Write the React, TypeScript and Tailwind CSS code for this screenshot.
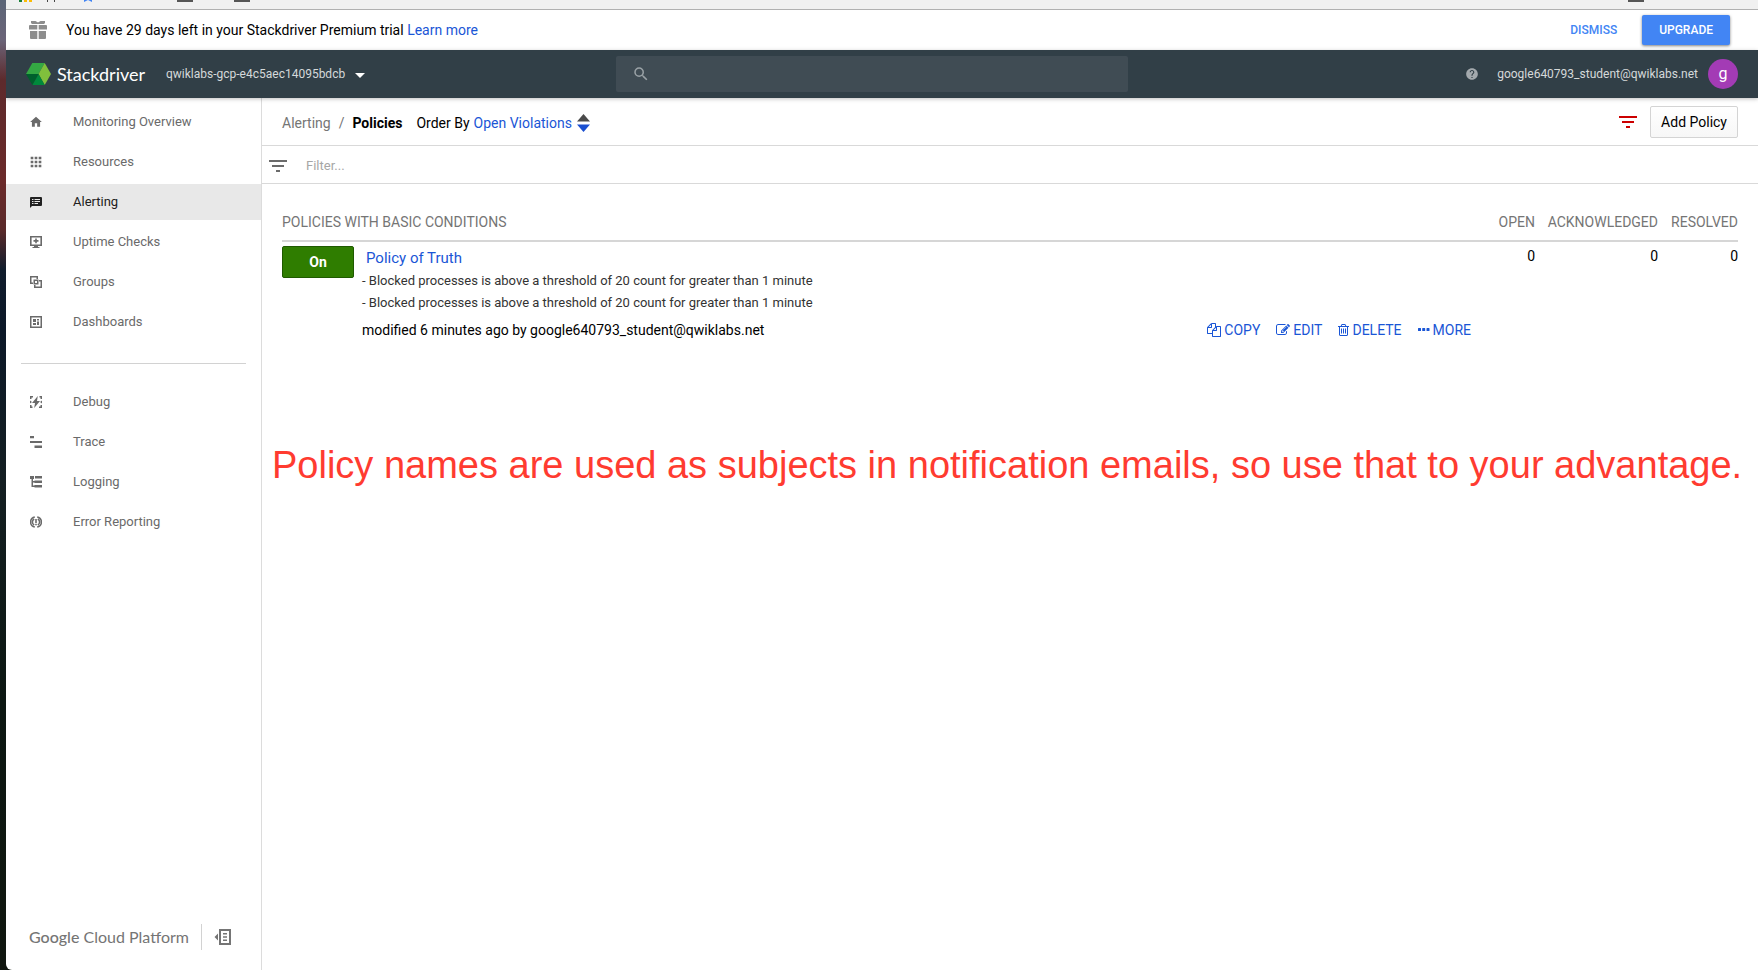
import type { ReactNode } from 'react';
import { MdApps, MdFilterList, MdHelp, MdHome, MdSearch } from 'react-icons/md';

type NavItem = { label: string; icon: ReactNode; active?: boolean };

function Glyph({ children }: { children: ReactNode }) {
  return (
    <svg viewBox="0 0 12 12" className="size-3" fill="currentColor" aria-hidden="true">
      {children}
    </svg>
  );
}

const primaryNav: NavItem[] = [
  { label: 'Monitoring Overview', icon: <MdHome className="size-3.5" /> },
  { label: 'Resources', icon: <MdApps className="size-4" /> },
  {
    label: 'Alerting',
    active: true,
    icon: (
      <Glyph>
        <path
          fillRule="evenodd"
          d="M1 1h10q1 0 1 1v7q0 1-1 1H2l-2 2V2q0-1 1-1ZM2 3v1h1.500V3ZM2 5v1h1.500V5ZM2 7v1h1.500V7ZM4.500 3v1H10V3ZM4.500 5v1H10V5ZM4.500 7v1H8V7Z"
        />
      </Glyph>
    ),
  },
  {
    label: 'Uptime Checks',
    icon: (
      <Glyph>
        <path
          fillRule="evenodd"
          d="M0 0h12v10H8v1h1.500v1h-7v-1H4v-1H0ZM1.600 1.600v6.800h8.800V1.600ZM5.200 2.500h1.600v1.600H8.500v1.600H6.800v1.600H5.200V5.700H3.500V4.100h1.700Z"
        />
      </Glyph>
    ),
  },
  {
    label: 'Groups',
    icon: (
      <Glyph>
        <path
          fillRule="evenodd"
          d="M0 0h8v3H6.500V1.500h-5v5H3V8H0ZM4 12V9h1.500v1.500h5v-5H9V4h3v8ZM3.500 3.500h5v5h-5ZM5 5v2h2V5Z"
        />
      </Glyph>
    ),
  },
  {
    label: 'Dashboards',
    icon: (
      <Glyph>
        <path
          fillRule="evenodd"
          d="M0 0h12v12H0ZM1.500 1.500v9h9v-9ZM3 3h3v3H3ZM3 7h3v2H3ZM7 3h2v1.500H7ZM7 5.500h2V9H7Z"
        />
      </Glyph>
    ),
  },
];

const secondaryNav: NavItem[] = [
  {
    label: 'Debug',
    icon: (
      <Glyph>
        <path d="M7.800 0 2 7h3L4.200 12l5.800-7H7ZM0 0h3v1.500H1.500V3H0ZM12 3h-1.500V1.500H9.500V0H12ZM0 9h1.500v1.500H2.500V12H0ZM9 12v-1.500h1.500V9H12v3ZM0 4.500l2 1.500-2 1.500ZM12 4.500 10 6l2 1.500Z" />
      </Glyph>
    ),
  },
  {
    label: 'Trace',
    icon: (
      <Glyph>
        <path d="M0 0h4v2.200H0ZM0 5h12v2H0ZM4.500 9.500H12V12H4.500Z" />
      </Glyph>
    ),
  },
  {
    label: 'Logging',
    icon: (
      <Glyph>
        <path d="M0 0h4v3H3v2h1.500v1.500H3v3h1.500V11H1.500V3H0ZM5 0h7v2.500H5ZM4.500 4.500H12V7H4.500ZM4.500 9H12v2.500H4.500Z" />
      </Glyph>
    ),
  },
  {
    label: 'Error Reporting',
    icon: (
      <Glyph>
        <path
          fill="none"
          stroke="currentColor"
          strokeWidth="1.500"
          d="M4.800.900a5.200 5.200 0 0 0 0 10.200M7.200.900a5.200 5.200 0 0 1 0 10.200M4.200 3a3.400 3.400 0 0 0 0 6M7.800 3a3.400 3.400 0 0 1 0 6"
        />
        <path d="M5.200 3h1.600v4H5.200ZM5.200 7.800h1.600v1.500H5.200Z" />
      </Glyph>
    ),
  },
];

function NavList({ items }: { items: NavItem[] }) {
  return (
    <ul className="flex flex-col gap-1">
      {items.map((item) => (
        <li key={item.label}>
          <a
            href="#"
            className={
              item.active
                ? 'flex h-9 items-center bg-[#e8e8e8] pl-5 text-[#212121]'
                : 'flex h-9 items-center pl-5 text-[#6a6a6a]'
            }
          >
            <span className="flex w-5 justify-center">{item.icon}</span>
            <span className="ml-[27px] text-[13px]">{item.label}</span>
          </a>
        </li>
      ))}
    </ul>
  );
}

function FaIcon({ d }: { d: string }) {
  return (
    <svg viewBox="0 0 1792 1792" className="size-3.5" fill="currentColor" aria-hidden="true">
      <path d={d} />
    </svg>
  );
}

const actions: { label: string; icon: ReactNode }[] = [
  {
    label: 'COPY',
    icon: (
      <FaIcon d="M1696 384q40 0 68 28t28 68v1216q0 40-28 68t-68 28h-960q-40 0-68-28t-28-68v-288h-544q-40 0-68-28t-28-68v-672q0-40 20-88t48-76l408-408q28-28 76-48t88-20h416q40 0 68 28t28 68v328q68-40 128-40h416zm-544 213l-299 299h299v-299zm-640-384l-299 299h299v-299zm196 647l316-316v-416h-384v416q0 40-28 68t-68 28h-416v640h512v-256q0-40 20-88t48-76zm956 804v-1152h-384v416q0 40-28 68t-68 28h-416v640h896z" />
    ),
  },
  {
    label: 'EDIT',
    icon: (
      <FaIcon d="M888 1184l116-116-152-152-116 116v56h96v96h56zm440-720q-16-16-33 1l-350 350q-17 17-1 33t33-1l350-350q17-17 1-33zm80 594v190q0 119-84.500 203.500t-203.500 84.500h-832q-119 0-203.500-84.500t-84.500-203.500v-832q0-119 84.500-203.500t203.500-84.500h832q63 0 117 25 15 7 18 23 3 17-9 29l-49 49q-14 14-32 8-23-6-45-6h-832q-66 0-113 47t-47 113v832q0 66 47 113t113 47h832q66 0 113-47t47-113v-126q0-13 9-22l64-64q15-15 35-7t20 29zm-96-738l288 288-672 672h-288v-288zm444 132l-92 92-288-288 92-92q28-28 68-28t68 28l152 152q28 28 28 68t-28 68z" />
    ),
  },
  {
    label: 'DELETE',
    icon: (
      <svg viewBox="192 0 1408 1792" className="h-3.5 w-[11px]" fill="currentColor" aria-hidden="true">
        <path d="M704 736v576q0 14-9 23t-23 9h-64q-14 0-23-9t-9-23v-576q0-14 9-23t23-9h64q14 0 23 9t9 23zm256 0v576q0 14-9 23t-23 9h-64q-14 0-23-9t-9-23v-576q0-14 9-23t23-9h64q14 0 23 9t9 23zm256 0v576q0 14-9 23t-23 9h-64q-14 0-23-9t-9-23v-576q0-14 9-23t23-9h64q14 0 23 9t9 23zm128 724v-948h-896v948q0 22 7 40.500t14.500 27 10.500 8.500h832q3 0 10.500-8.500t14.500-27 7-40.500zm-672-1076h448l-48-117q-7-9-17-11h-317q-10 2-17 11zm928 32v64q0 14-9 23t-23 9h-96v948q0 83-47 143.500t-113 60.500h-832q-66 0-113-58.500t-47-141.500v-952h-96q-14 0-23-9t-9-23v-64q0-14 9-23t23-9h309l70-167q15-37 54-63t79-26h320q40 0 79 26t54 63l70 167h309q14 0 23 9t9 23z" />
      </svg>
    ),
  },
  {
    label: 'MORE',
    icon: (
      <svg viewBox="0 0 12 12" className="size-3" fill="currentColor" aria-hidden="true">
        <path d="M.500 4h2q.500 0 .500.500v2q0 .500-.500.500h-2Q0 7 0 6.500v-2Q0 4 .500 4ZM4.700 4h2q.500 0 .500.500v2q0 .500-.500.500h-2q-.500 0-.500-.500v-2q0-.500.500-.500ZM9 4h2q.500 0 .500.500v2q0 .500-.500.500H9q-.500 0-.500-.500v-2Q8.500 4 9 4Z" />
      </svg>
    ),
  },
];

function BookmarksStrip() {
  return (
    <div className="h-2.5 shrink-0 overflow-hidden border-b border-[#b0b0b0] bg-[#f0f0f0]">
      <svg width="100%" height="3" className="block" aria-hidden="true">
        <path fill="#188038" d="M13 0h3v2h-3Z" />
        <path fill="#fbbc04" d="M18 0h3v2h-3ZM23 0h3v2h-3Z" />
        <path fill="#4285f4" d="M78 2V0h2l2 1 2-1h2v2l-2-1h-4Z" />
        <path fill="#444" d="M41 0h1v2h-1ZM48 0h1v2h-1Z" />
        <path fill="#555" d="M171 0h16v2h-16ZM228 0h16v2h-16Z" />
        <svg x="100%" overflow="visible">
          <path fill="#555" d="M-130 0h16v2h-16Z" />
        </svg>
      </svg>
    </div>
  );
}

function TrialBanner() {
  return (
    <div className="flex h-10 shrink-0 items-center bg-white pl-5 pr-7">
      <svg viewBox="0 0 18 18" className="ml-[3px] size-[18px]" fill="#8d8d8d" aria-hidden="true">
        <path d="M2 0h4.500L9 1.500 11.500 0H16v2l-1 1H3L2 2ZM1 4h7.300v4.500H0V5q0-1 1-1ZM9.700 4H17q1 0 1 1v3.500H9.700ZM1 10h7.300v8H2q-1 0-1-1ZM9.700 10H17v7q0 1-1 1H9.700Z" />
      </svg>
      <p className="ml-[19px] text-sm text-black">
        You have 29 days left in your Stackdriver Premium trial{' '}
        <a href="#" className="text-[#1a56d6]">
          Learn more
        </a>
      </p>
      <div className="ml-auto flex items-center gap-[25px]">
        <button type="button" className="text-xs font-medium text-[#4285f4]">
          DISMISS
        </button>
        <button
          type="button"
          className="h-[30px] rounded-xs bg-[#4285f4] px-[17px] text-xs font-medium text-white shadow-[0_1px_3px_rgba(0,0,0,0.5)]"
        >
          UPGRADE
        </button>
      </div>
    </div>
  );
}

function Header() {
  return (
    <header className="z-10 flex h-12 shrink-0 items-center bg-[#313f47] px-5 text-[#d5d9da] shadow-[0_1px_4px_rgba(0,0,0,0.25)]">
      <div className="flex w-[590px] shrink items-center">
        <svg viewBox="0 0 25 22" className="h-[22px] w-[25px]" aria-hidden="true">
          <path fill="#34a843" d="M6.300 0h12.400L12.500 11H0Z" />
          <path fill="#80c03c" d="M18.700 0 25 11l-6.300 11-6.200-11Z" />
          <path fill="#00893b" d="M12.500 11l6.200 11H6.300Z" />
          <path fill="#00602c" d="M0 11h12.500L6.300 22Z" />
        </svg>
        <span className="ml-1.5 w-[109px] font-[Lato,sans-serif] text-lg leading-6 text-white">Stackdriver</span>
        <button type="button" className="flex items-center gap-2.5 text-xs">
          qwiklabs-gcp-e4c5aec14095bdcb
          <svg viewBox="0 0 10 5" className="mt-0.5 h-[5px] w-2.5" fill="#ffffff" aria-hidden="true">
            <path d="M0 0h10L5 5Z" />
          </svg>
        </button>
      </div>
      <label className="flex h-9 max-w-[512px] flex-1 items-center rounded-xs bg-[#404c54] pl-4">
        <MdSearch className="size-[18px] text-[#9aa2a6]" />
        <input type="text" aria-label="Search" className="ml-3 min-w-0 flex-1 bg-transparent text-sm outline-none" />
      </label>
      <div className="ml-auto flex items-center">
        <button type="button" aria-label="Help">
          <MdHelp className="size-3.5 text-[#a3a9ad]" />
        </button>
        <span className="ml-[18px] text-xs">google640793_student@qwiklabs.net</span>
        <span className="ml-2.5 flex size-[30px] items-center justify-center rounded-full bg-[#a33bb5] text-base text-white">
          g
        </span>
      </div>
    </header>
  );
}

function Sidebar() {
  return (
    <aside className="flex w-64 shrink-0 flex-col border-r border-[#dcdcdc] pt-1.5">
      <nav>
        <NavList items={primaryNav} />
        <hr className="mx-[15px] mb-5 mt-[23px] border-[#d2d2d2]" />
        <NavList items={secondaryNav} />
      </nav>
      <div className="mb-5 mt-auto flex items-center pl-[23px] text-[#757575]">
        <span className="font-[Lato,sans-serif] text-base">
          <span className="font-medium">Google</span> Cloud Platform
        </span>
        <button type="button" aria-label="Collapse menu" className="ml-3 border-l border-[#d2d2d2] py-[5px] pl-3">
          <svg viewBox="0 0 17 16" className="h-4 w-[17px]" fill="currentColor" aria-hidden="true">
            <path fillRule="evenodd" d="M4 4.500v7L.500 8ZM5 0h12v16H5ZM7 2v12h8V2ZM9 4h4v1.500H9ZM9 7.200h4v1.500H9ZM9 10.500h4V12H9Z" />
          </svg>
        </button>
      </div>
    </aside>
  );
}

function PoliciesTable() {
  return (
    <table className="mt-7 w-full text-sm text-black">
      <thead>
        <tr className="border-b-2 border-[#d6d6d6] text-left text-[#757575]">
          <th colSpan={2} className="pb-2 font-normal">
            POLICIES WITH BASIC CONDITIONS
          </th>
          <th className="pb-2 text-right font-normal">OPEN</th>
          <th className="w-[123px] pb-2 text-right font-normal">ACKNOWLEDGED</th>
          <th className="w-20 pb-2 text-right font-normal">RESOLVED</th>
        </tr>
      </thead>
      <tbody>
        <tr className="align-top">
          <td className="w-20 pt-1">
            <button
              type="button"
              className="block h-8 w-18 rounded-xs border border-[#1f5a00] bg-[#2f7d00] text-sm font-bold text-white"
            >
              On
            </button>
          </td>
          <td className="pt-1">
            <a href="#" className="ml-1 block text-[15px] leading-6 text-[#1a56d6]">
              Policy of Truth
            </a>
            <ul className="text-[13px] leading-[22px] text-[#333333]">
              <li>- Blocked processes is above a threshold of 20 count for greater than 1 minute</li>
              <li>- Blocked processes is above a threshold of 20 count for greater than 1 minute</li>
            </ul>
            <div className="mt-1.5 flex items-center justify-between leading-5">
              <p>modified 6 minutes ago by google640793_student@qwiklabs.net</p>
              <div className="flex gap-4 text-[#1a56d6]">
                {actions.map((action) => (
                  <button key={action.label} type="button" className="flex items-center gap-[3px]">
                    {action.icon}
                    {action.label}
                  </button>
                ))}
              </div>
            </div>
          </td>
          <td className="w-16 pt-1 text-right">0</td>
          <td className="pt-1 text-right">0</td>
          <td className="pt-1 text-right">0</td>
        </tr>
      </tbody>
    </table>
  );
}

export default function App() {
  return (
    <div className="flex min-h-screen bg-[linear-gradient(#5b6577_0px,#6b6478_40px,#5d2a2c_80px,#6b2a2a_180px,#5a2a2a_230px,#101c2c_270px,#0c1828_330px,#141f22_480px,#0c1712_700px,#10160f_970px)] pl-1.5 font-[Roboto,sans-serif]">
      <div className="flex min-w-0 flex-1 flex-col overflow-hidden rounded-bl-md bg-white">
        <BookmarksStrip />
        <TrialBanner />
        <Header />
        <div className="flex flex-1">
          <Sidebar />
          <main className="min-w-0 flex-1">
            <div className="flex h-12 items-center border-b border-[#d9d9d9] px-5 text-sm text-black">
              <div className="flex items-center pt-0.5">
                <a href="#" className="text-[#757575]">
                  Alerting
                </a>
                <span className="ml-2 text-[#757575]">/</span>
                <h1 className="ml-2 font-bold">Policies</h1>
                <span className="ml-3.5">Order By</span>
                <button type="button" className="ml-1 flex items-center gap-[5px] text-[#1a56d6]">
                  Open Violations
                  <svg viewBox="0 0 13 18" className="h-[18px] w-[13px]" aria-hidden="true">
                    <path fill="#4a4a4a" d="M6.500 0 13 7.500H0Z" />
                    <path fill="#1a4fd0" d="M0 10.500h13L6.500 18Z" />
                  </svg>
                </button>
              </div>
              <button type="button" aria-label="Toggle filter" className="ml-auto">
                <MdFilterList className="size-6 text-[#cc0000]" />
              </button>
              <button
                type="button"
                className="ml-2.5 h-8 rounded-xs border border-[#d4d4d4] bg-linear-to-b from-white to-[#f7f7f7] px-2.5"
              >
                Add Policy
              </button>
            </div>
            <label className="flex h-[38px] items-center border-b border-[#d9d9d9] pl-1 pt-0.5">
              <MdFilterList className="size-6 text-[#6b6b6b]" />
              <input
                type="text"
                aria-label="Filter"
                placeholder="Filter..."
                className="ml-4 min-w-0 flex-1 text-[13px] outline-none placeholder:text-[#a6a6a6]"
              />
            </label>
            <div className="px-5">
              <PoliciesTable />
            </div>
            <p className="mt-[100px] pl-2.5 font-['Liberation_Sans',sans-serif] text-[38px] leading-[50px] text-[#ff3b30]">
              Policy names are used as subjects in notification emails, so use that to your advantage.
            </p>
          </main>
        </div>
      </div>
    </div>
  );
}
